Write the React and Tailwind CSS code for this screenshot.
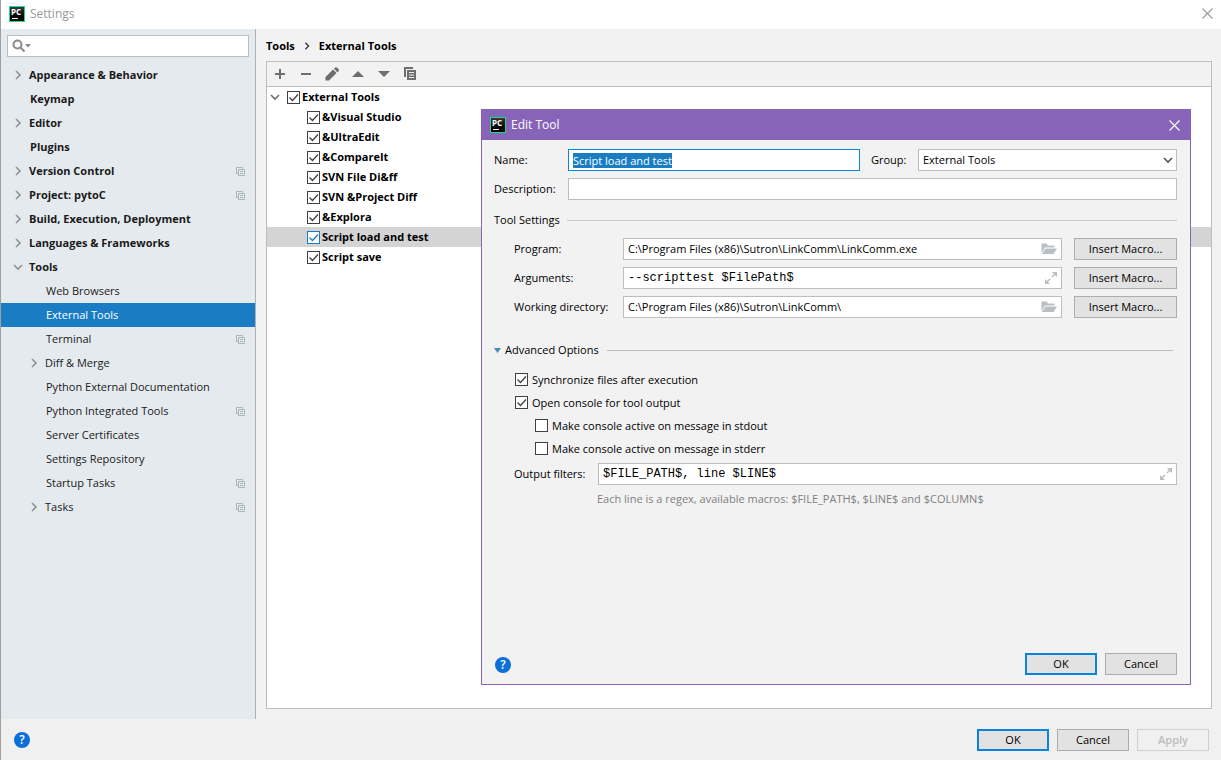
import { useEffect, useRef } from 'react'

const settingsTree = [
  { label: 'Appearance & Behavior', level: 0, arrow: 'right' },
  { label: 'Keymap', level: 0 },
  { label: 'Editor', level: 0, arrow: 'right' },
  { label: 'Plugins', level: 0 },
  { label: 'Version Control', level: 0, arrow: 'right', project: true },
  { label: 'Project: pytoC', level: 0, arrow: 'right', project: true },
  { label: 'Build, Execution, Deployment', level: 0, arrow: 'right' },
  { label: 'Languages & Frameworks', level: 0, arrow: 'right' },
  { label: 'Tools', level: 0, arrow: 'down' },
  { label: 'Web Browsers', level: 1 },
  { label: 'External Tools', level: 1, active: true },
  { label: 'Terminal', level: 1, project: true },
  { label: 'Diff & Merge', level: 1, arrow: 'right' },
  { label: 'Python External Documentation', level: 1 },
  { label: 'Python Integrated Tools', level: 1, project: true },
  { label: 'Server Certificates', level: 1 },
  { label: 'Settings Repository', level: 1 },
  { label: 'Startup Tasks', level: 1, project: true },
  { label: 'Tasks', level: 1, arrow: 'right', project: true },
]

const tools = [
  '&Visual Studio',
  '&UltraEdit',
  '&CompareIt',
  'SVN File Di&ff',
  'SVN &Project Diff',
  '&Explora',
  'Script load and test',
  'Script save',
]

function Logo() {
  return (
    <span className="relative block size-4 border border-[#21d789] bg-linear-to-b from-[#3a3a3a] to-black">
      <span className="absolute left-px top-0 font-['Open_Sans'] text-[8px] leading-[9px] font-bold text-white">PC</span>
      <span className="absolute bottom-[2px] left-[2px] h-px w-[6px] bg-white" />
    </span>
  )
}

function Chevron({ dir, className = '', size = 'size-[10px]' }) {
  return (
    <svg viewBox="0 0 10 10" className={`${size} ${className}`} fill="none" stroke="currentColor" strokeWidth="1.6">
      <path d={dir === 'down' ? 'M1 3l4 4 4-4' : 'M3 1l4 4-4 4'} />
    </svg>
  )
}

function CloseIcon() {
  return (
    <svg viewBox="0 0 11 11" className="size-[11px]" fill="none" stroke="currentColor" strokeWidth="1.1">
      <path d="M.5.5l10 10M10.500.5l-10 10" />
    </svg>
  )
}

function ProjectIcon() {
  return (
    <svg viewBox="0 0 9 9" className="size-[9px] text-[#a9b5bd]" fill="none" stroke="currentColor">
      <path d="M2 6.500H.5v-6h6V2M2.500 2.500h6v6h-6zM4 4.500h3M4 6.500h3" />
    </svg>
  )
}

function FolderIcon() {
  return (
    <svg viewBox="0 0 16 12" className="h-3 w-4 text-[#b9bfc3]" fill="currentColor">
      <path d="M.5 10V.5h5L7 2.500h6.500v2H4z" />
      <path d="M4.500 5.500H16L12.500 11H.8z" />
    </svg>
  )
}

function ExpandIcon() {
  return (
    <svg viewBox="0 0 12 12" className="size-3 text-[#b9bfc3]">
      <path fill="currentColor" d="M7 0h5v5zM0 7v5h5z" />
      <path fill="none" stroke="currentColor" strokeWidth="1.600" d="M7 5l3-3M2 10l3-3" />
    </svg>
  )
}

function HelpButton() {
  return (
    <button type="button" aria-label="Help" className="mt-px block size-4 rounded-full bg-[#0a6fd6] text-center text-xs leading-4 font-semibold text-white">
      ?
    </button>
  )
}

function Checkbox({ label, checked, active, bold, className = '' }) {
  return (
    <label className={`flex items-center ${bold ? 'gap-0.5 font-bold' : 'gap-1'} ${className}`}>
      <span className={`relative size-[13px] ${active ? 'text-[#1a7dc4]' : 'text-[#404040]'}`}>
        <input type="checkbox" defaultChecked={checked} className="peer block size-[13px] appearance-none border border-current bg-white" />
        <svg viewBox="0 0 13 13" className="pointer-events-none absolute inset-0 hidden size-[13px] peer-checked:block" fill="none" stroke="currentColor" strokeWidth="1.300">
          <path d="M2.500 6.500l3 3 5.500-6" />
        </svg>
      </span>
      <span className={bold ? 'text-black' : ''}>{label}</span>
    </label>
  )
}

function Button({ children, primary, disabled, className = 'w-[72px]' }) {
  const look = primary
    ? 'border-2 border-[#0a84de] bg-[#e2e2e2]'
    : disabled
      ? 'border border-[#d0d0d0] font-semibold text-[#bcbcbc]'
      : 'border border-[#adadad] bg-[#e2e2e2]'
  return (
    <button type="button" disabled={disabled} className={`flex h-[22px] items-center justify-center ${look} ${className}`}>
      {children}
    </button>
  )
}

function FieldRow({ id, label, value, mono, icon }) {
  return (
    <div className="flex items-center">
      <label htmlFor={id} className="w-[109px]">{label}</label>
      <div className="flex h-[22px] flex-1 items-center border border-[#bdbdbd] bg-white pr-1">
        <input id={id} defaultValue={value} className={`min-w-0 flex-1 px-1 outline-none ${mono ? "font-['Liberation_Mono'] text-xs" : ''}`} />
        {icon}
      </div>
      <Button className="ml-3 w-[103px]">Insert Macro...</Button>
    </div>
  )
}

function Sidebar() {
  return (
    <aside className="w-[255px] shrink-0 border-r border-[#adb1b4] bg-[#e5eaee] pt-1.5">
      <div className="mr-1.5 ml-1.5 flex h-[22px] items-center border border-[#bdbdbd] bg-white px-1">
        <svg viewBox="0 0 19 14" className="h-[14px] w-[19px] text-[#8a8a8a]" fill="none" stroke="currentColor" strokeWidth="2">
          <circle cx="5.500" cy="5.500" r="4" />
          <path d="M8.500 8.500l4 4" />
          <path d="M13 5h6l-3 3.500z" fill="currentColor" stroke="none" />
        </svg>
        <input aria-label="Search settings" className="min-w-0 flex-1 outline-none" />
      </div>
      <nav className="mt-1.5">
        {settingsTree.map((item) => (
          <a
            key={item.label}
            href="#"
            className={`flex h-6 items-center pr-[10px] ${item.level === 0 ? 'pl-3 font-bold' : 'pl-7'} ${item.active ? 'bg-[#1a7dc4] text-white' : 'text-[#1a1a1a]'}`}
          >
            <span className={item.arrow ? 'w-4' : 'w-[17px]'}>{item.arrow && <Chevron dir={item.arrow} className="text-[#8c9194]" />}</span>
            <span className="flex-1">{item.label}</span>
            {item.project && <ProjectIcon />}
          </a>
        ))}
      </nav>
    </aside>
  )
}

function Toolbar() {
  return (
    <div className="flex h-[25px] items-center gap-[10px] border-b border-[#bdbdbd] bg-[#f2f2f2] px-[5px] text-[#6e6e6e]">
      <button type="button" aria-label="Add">
        <svg viewBox="0 0 16 16" className="size-4" fill="currentColor"><path d="M7 3h2v4h4v2H9v4H7V9H3V7h4z" /></svg>
      </button>
      <button type="button" aria-label="Remove">
        <svg viewBox="0 0 16 16" className="size-4" fill="currentColor"><path d="M3 7h10v2H3z" /></svg>
      </button>
      <button type="button" aria-label="Edit">
        <svg viewBox="0 0 16 16" className="size-4" fill="currentColor"><path d="M1.500 14.500v-3.500L9 3.500l3.500 3.500L5 14.500zM10 2.800l1.300-1.300q.8-.6 1.600 0l1.800 1.800q.6.800 0 1.600L13.300 6.200z" /></svg>
      </button>
      <button type="button" aria-label="Move up">
        <svg viewBox="0 0 16 16" className="size-4" fill="currentColor"><path d="M2 11l6-6 6 6z" /></svg>
      </button>
      <button type="button" aria-label="Move down">
        <svg viewBox="0 0 16 16" className="size-4" fill="currentColor"><path d="M2 5h12l-6 6z" /></svg>
      </button>
      <button type="button" aria-label="Copy">
        <svg viewBox="0 0 16 16" className="size-4" fill="currentColor">
          <path d="M2 1h9v2H4v8H2z" />
          <path fillRule="evenodd" d="M5 4h9v10H5zM7 6v1h5V6zM7 8.500v1h5v-1zM7 11v1h5v-1z" />
        </svg>
      </button>
    </div>
  )
}

function EditToolDialog() {
  const nameRef = useRef(null)

  useEffect(() => {
    nameRef.current.focus()
    nameRef.current.select()
  }, [])

  return (
    <div role="dialog" aria-label="Edit Tool" className="absolute top-[109px] right-[30px] flex h-[576px] w-[710px] flex-col border border-[#8764b8] bg-[#f2f2f2]">
      <div className="flex h-[30px] items-center bg-[#8764b8] pr-[10px] pl-2 text-xs text-white">
        <Logo />
        <span className="ml-[5px] flex-1">Edit Tool</span>
        <button type="button" aria-label="Close dialog"><CloseIcon /></button>
      </div>

      <form className="flex flex-1 flex-col pt-[9px] pr-[13px] pb-[9px] pl-3">
        <div className="flex items-center">
          <label htmlFor="name" className="w-[74px]">Name:</label>
          <input id="name" ref={nameRef} defaultValue="Script load and test" className="h-[22px] min-w-0 flex-1 border border-[#0a84de] bg-white px-1 outline-none selection:bg-[#1a7dc4] selection:text-white" />
          <label htmlFor="group" className="w-[58px] pl-[11px]">Group:</label>
          <div className="relative w-[259px]">
            <select id="group" className="block h-[22px] w-full appearance-none border border-[#bdbdbd] bg-white px-1">
              <option>External Tools</option>
            </select>
            <Chevron dir="down" className="pointer-events-none absolute top-[6px] right-1 text-[#555555]" />
          </div>
        </div>
        <div className="mt-[7px] flex items-center">
          <label htmlFor="description" className="w-[74px]">Description:</label>
          <input id="description" className="h-[22px] min-w-0 flex-1 border border-[#bdbdbd] bg-white px-1 outline-none" />
        </div>

        <div className="mt-3 flex h-4 items-center gap-[7px]">
          <h2>Tool Settings</h2>
          <span className="h-px flex-1 bg-[#c9c9c9]" />
        </div>
        <div className="mt-[10px] flex flex-col gap-[7px] pl-5">
          <FieldRow id="program" label="Program:" value="C:\Program Files (x86)\Sutron\LinkComm\LinkComm.exe" icon={<FolderIcon />} />
          <FieldRow id="arguments" label="Arguments:" value="--scripttest $FilePath$" mono icon={<ExpandIcon />} />
          <FieldRow id="workdir" label="Working directory:" value="C:\Program Files (x86)\Sutron\LinkComm\" icon={<FolderIcon />} />
        </div>

        <div className="mt-6 flex h-4 items-center pr-1">
          <button type="button" className="flex items-center gap-1">
            <svg viewBox="0 0 7 5" className="h-[5px] w-[7px]" fill="#3c8fb8"><path d="M0 0h7L3.500 5z" /></svg>
            Advanced Options
          </button>
          <span className="ml-2 h-px flex-1 bg-[#bdbdbd]" />
        </div>
        <div className="mt-[10px] flex flex-col pl-5">
          <Checkbox label="Synchronize files after execution" checked className="h-[23px] pl-px" />
          <Checkbox label="Open console for tool output" checked className="h-[23px] pl-px" />
          <Checkbox label="Make console active on message in stdout" className="h-[23px] pl-[21px]" />
          <Checkbox label="Make console active on message in stderr" className="h-[23px] pl-[21px]" />
        </div>
        <div className="mt-[3px] flex items-center pl-5">
          <label htmlFor="filters" className="w-[84px]">Output filters:</label>
          <div className="flex h-[22px] flex-1 items-center border border-[#bdbdbd] bg-white pr-1">
            <input id="filters" defaultValue="$FILE_PATH$, line $LINE$" className="min-w-0 flex-1 px-1 font-['Liberation_Mono'] text-xs outline-none" />
            <ExpandIcon />
          </div>
        </div>
        <p className="mt-1.5 pl-[103px] text-[#808080]">Each line is a regex, available macros: $FILE_PATH$, $LINE$ and $COLUMN$</p>

        <div className="mt-auto flex items-center gap-2 pl-px">
          <span className="flex-1"><HelpButton /></span>
          <Button primary>OK</Button>
          <Button>Cancel</Button>
        </div>
      </form>
    </div>
  )
}

export default function App() {
  return (
    <div className="relative flex h-screen min-h-[720px] flex-col border-l border-[#a0a0a0] bg-[#f2f2f2] font-['Open_Sans',sans-serif] text-[11px] leading-4 text-black">
      <header className="flex h-[29px] shrink-0 items-center bg-white pr-2 pb-0.5 pl-2 text-xs text-[#999999]">
        <Logo />
        <span className="ml-[5px] flex-1">Settings</span>
        <button type="button" aria-label="Close"><CloseIcon /></button>
      </header>

      <div className="flex min-h-0 flex-1">
        <Sidebar />
        <main className="flex min-w-0 flex-1 flex-col pt-[9px] pr-[9px] pb-[10px] pl-[10px]">
          <div className="flex h-4 items-center gap-2 font-bold">
            <a href="#">Tools</a>
            <Chevron dir="right" size="size-2" className="text-[#333333]" />
            <span>External Tools</span>
          </div>
          <section className="mt-[7px] flex-1 border border-[#bdbdbd] bg-white">
            <Toolbar />
            <div className="flex h-5 items-center pl-[3px]">
              <Chevron dir="down" className="text-[#6e6e6e]" />
              <Checkbox label="External Tools" checked bold className="pl-[7px]" />
            </div>
            {tools.map((tool) => {
              const active = tool === 'Script load and test'
              return (
                <div key={tool} className={`flex h-5 items-center pl-10 ${active ? 'bg-[#d4d4d4]' : ''}`}>
                  <Checkbox label={tool} checked bold active={active} />
                </div>
              )
            })}
          </section>
        </main>
      </div>

      <footer className="flex h-[41px] shrink-0 items-center gap-2 bg-[#f0f0f0] pr-3 pl-[13px]">
        <span className="flex-1"><HelpButton /></span>
        <Button primary>OK</Button>
        <Button>Cancel</Button>
        <Button disabled>Apply</Button>
      </footer>

      <EditToolDialog />
    </div>
  )
}
